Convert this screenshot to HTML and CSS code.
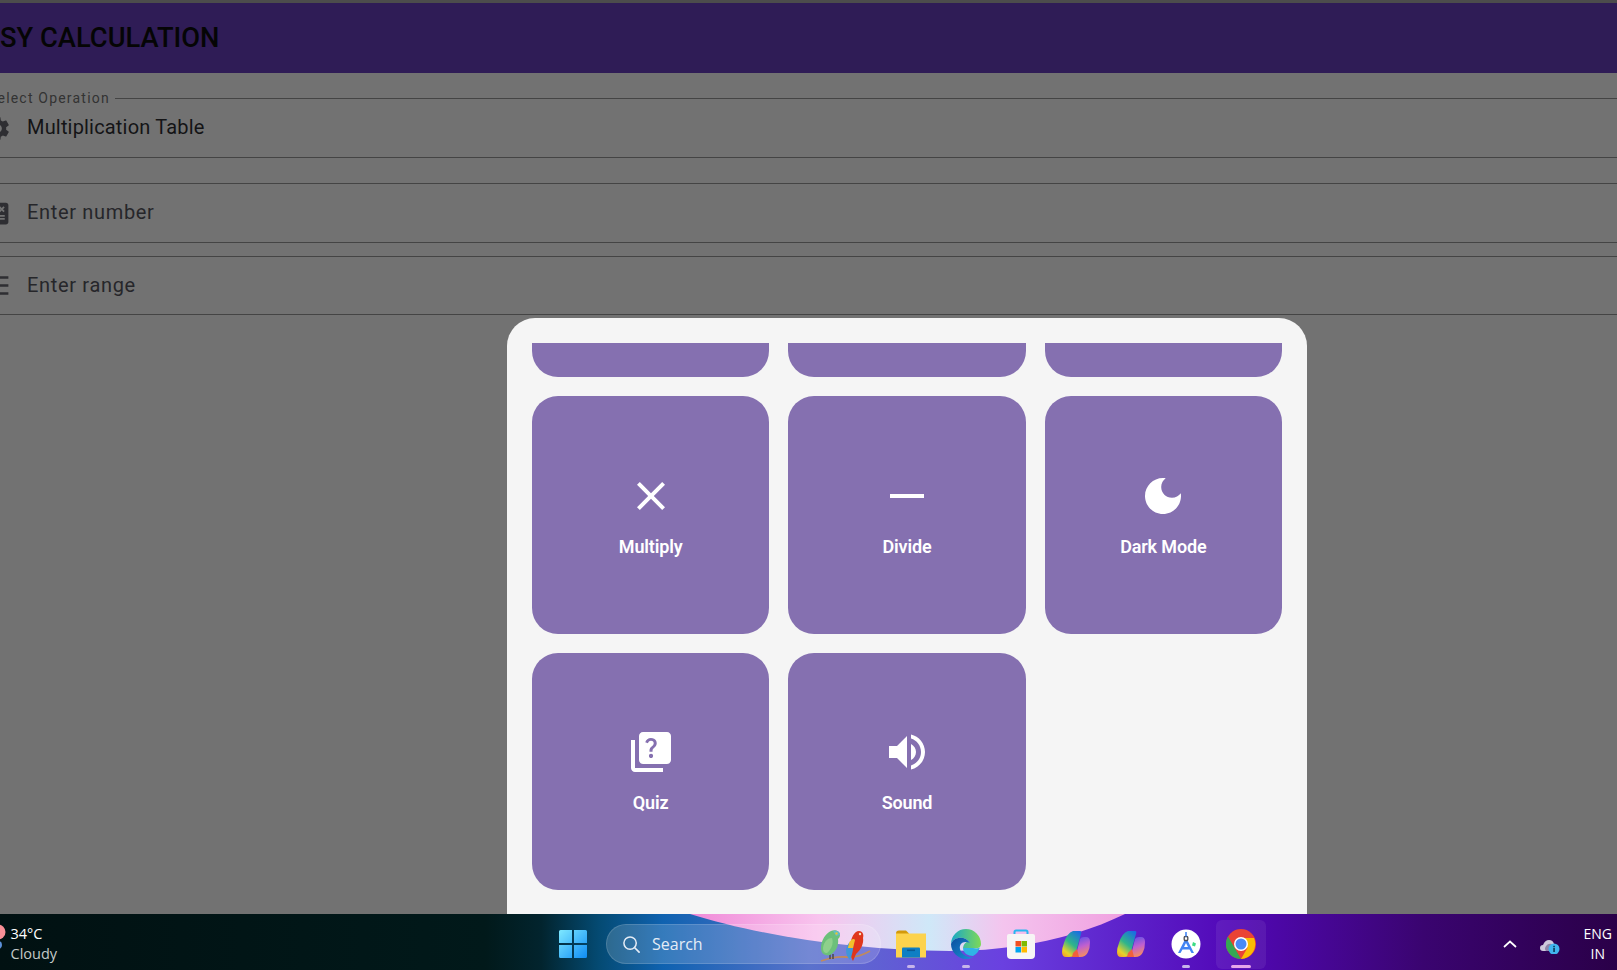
FILE: index.html
```html
<!DOCTYPE html>
<html lang="en">
<head>
<meta charset="utf-8">
<title>Easy Calculation</title>
<link rel="stylesheet" href="styles.css">
</head>
<body>
<div class="top-strip"></div>
<header class="appbar"><h1 class="appbar-title">EASY CALCULATION</h1></header>
<main class="form">
  <div class="field field-select">
    <span class="floating-label">Select Operation</span>
    <svg class="field-icon" viewBox="0 0 24 24"><path d="M19.14 12.94c.04-.3.06-.61.06-.94 0-.32-.02-.64-.07-.94l2.03-1.58c.18-.14.23-.41.12-.61l-1.92-3.32c-.12-.22-.37-.29-.59-.22l-2.39.96c-.5-.38-1.03-.7-1.62-.94l-.36-2.54c-.04-.24-.24-.41-.48-.41h-3.84c-.24 0-.43.17-.47.41l-.36 2.54c-.59.24-1.13.57-1.62.94l-2.39-.96c-.22-.08-.47 0-.59.22L2.74 8.87c-.12.21-.08.47.12.61l2.03 1.58c-.05.3-.09.63-.09.94s.02.64.07.94l-2.03 1.58c-.18.14-.23.41-.12.61l1.92 3.32c.12.22.37.29.59.22l2.39-.96c.5.38 1.03.7 1.62.94l.36 2.54c.05.24.24.41.48.41h3.84c.24 0 .44-.17.47-.41l.36-2.54c.59-.24 1.13-.56 1.62-.94l2.39.96c.22.08.47 0 .59-.22l1.92-3.32c.12-.22.07-.47-.12-.61l-2.01-1.58zM12 15.6c-1.98 0-3.6-1.62-3.6-3.6s1.62-3.6 3.6-3.6 3.6 1.62 3.6 3.6-1.62 3.6-3.6 3.6z"/></svg>
    <span class="field-value">Multiplication Table</span>
  </div>
  <div class="field field-number">
    <svg class="field-icon" viewBox="0 0 24 24"><path d="M19 3H5c-1.1 0-2 .9-2 2v14c0 1.1.9 2 2 2h14c1.1 0 2-.9 2-2V5c0-1.1-.9-2-2-2zm-5.97 4.06L14.09 6l1.41 1.41L16.91 6l1.06 1.06-1.41 1.41 1.41 1.41-1.06 1.06-1.41-1.4-1.41 1.41-1.06-1.06 1.41-1.41-1.41-1.42zm-6.78.66h5v1.5h-5v-1.5zM11.5 16h-2v2H8v-2H6v-1.5h2v-2h1.5v2h2V16zm6.5 1.25h-5v-1.5h5v1.5zm0-2.5h-5v-1.5h5v1.5z"/></svg>
    <span class="field-hint">Enter number</span>
  </div>
  <div class="field field-range">
    <svg class="field-icon" viewBox="0 0 24 24"><path d="M0 4.350h21v2.100H0zM0 10.950h21v2.100H0zM0 17.550h21v2.100H0z"/></svg>
    <span class="field-hint">Enter range</span>
  </div>
</main>

<section class="sheet">
  <div class="sheet-scroll">
    <div class="tile-grid">
      <div class="tile"></div>
      <div class="tile"></div>
      <div class="tile"></div>
      <div class="tile">
        <svg class="tile-icon" viewBox="0 0 24 24"><path d="M19 6.41L17.59 5 12 10.59 6.41 5 5 6.41 10.59 12 5 17.59 6.41 19 12 13.41 17.59 19 19 17.59 13.41 12z"/></svg>
        <span class="tile-label">Multiply</span>
      </div>
      <div class="tile">
        <svg class="tile-icon" viewBox="0 0 24 24"><path d="M3.500 11h17v2h-17z"/></svg>
        <span class="tile-label">Divide</span>
      </div>
      <div class="tile">
        <svg class="tile-icon" viewBox="0 0 24 24"><path d="M12 3c-4.97 0-9 4.03-9 9s4.03 9 9 9 9-4.03 9-9c0-.46-.04-.92-.1-1.36-.98 1.37-2.58 2.26-4.4 2.26-2.98 0-5.4-2.42-5.4-5.4 0-1.81.89-3.42 2.26-4.4-.44-.06-.9-.1-1.36-.1z"/></svg>
        <span class="tile-label">Dark Mode</span>
      </div>
      <div class="tile">
        <svg class="tile-icon" viewBox="0 0 24 24"><path d="M4 6H2v14c0 1.1.9 2 2 2h14v-2H4V6zm16-4H8c-1.1 0-2 .9-2 2v12c0 1.1.9 2 2 2h12c1.1 0 2-.9 2-2V4c0-1.1-.9-2-2-2zm-7.99 13c-.59 0-1.05-.47-1.05-1.05 0-.59.47-1.04 1.05-1.04.59 0 1.04.45 1.04 1.04-.01.58-.45 1.05-1.04 1.05zm2.5-6.17c-.63.93-1.23 1.21-1.56 1.81-.13.24-.18.4-.18 1.18h-1.52c0-.41-.06-1.08.26-1.65.41-.73 1.18-1.16 1.63-1.8.48-.68.21-1.94-1.14-1.94-.88 0-1.32.67-1.5 1.23l-1.37-.57C9.51 5.96 10.52 5 11.99 5c1.23 0 2.08.56 2.51 1.26.37.61.58 1.73.01 2.57z"/></svg>
        <span class="tile-label">Quiz</span>
      </div>
      <div class="tile">
        <svg class="tile-icon" viewBox="0 0 24 24"><path d="M3 9v6h4l5 5V4L7 9H3zm13.500 3c0-1.77-1.02-3.29-2.5-4.03v8.05c1.48-.73 2.5-2.25 2.5-4.02zM14 3.23v2.06c2.89.86 5 3.54 5 6.71s-2.11 5.85-5 6.71v2.06c4.01-.91 7-4.49 7-8.77 0-4.28-2.99-7.86-7-8.77z"/></svg>
        <span class="tile-label">Sound</span>
      </div>
    </div>
  </div>
</section>

<footer class="taskbar">
  <svg class="wallpaper" viewBox="0 0 1617 56" preserveAspectRatio="none">
    <defs>
      <linearGradient id="wp" x1="0" x2="1" y1="0" y2="0">
        <stop offset="0" stop-color="#011112"/>
        <stop offset=".3" stop-color="#01191a"/>
        <stop offset=".335" stop-color="#02242e"/>
        <stop offset=".37" stop-color="#044a72"/>
        <stop offset=".41" stop-color="#0f62b0"/>
        <stop offset=".5" stop-color="#5a72cc"/>
        <stop offset=".62" stop-color="#6a40e0"/>
        <stop offset=".76" stop-color="#5208b8"/>
        <stop offset=".88" stop-color="#3a0470"/>
        <stop offset="1" stop-color="#2a0048"/>
      </linearGradient>
      <linearGradient id="pink" x1="0" x2="1" y1="0" y2="0">
        <stop offset="0" stop-color="#f08ad8"/>
        <stop offset=".3" stop-color="#f8c4ee"/>
        <stop offset=".55" stop-color="#cfe8f8"/>
        <stop offset=".72" stop-color="#f4c4ee"/>
        <stop offset="1" stop-color="#f0a0e0"/>
      </linearGradient>
    </defs>
    <rect width="1617" height="56" fill="url(#wp)"/>
    <path d="M690 0C760 22 860 37 950 37C1020 37 1080 22 1125 0Z" fill="url(#pink)"/>
  </svg>

  <div class="weather">
    <svg class="weather-icon" viewBox="0 0 8 28"><circle cx="-2" cy="8" r="7.500" fill="#f98f96"/><circle cx="-2" cy="21" r="4" fill="#5b8fd8"/></svg>
    <span class="weather-temp">34°C</span>
    <span class="weather-desc">Cloudy</span>
  </div>

  <div class="tb-item">
    <svg class="tb-icon" viewBox="0 0 30 30">
      <defs><linearGradient id="win" x1="0" y1="0" x2="1" y2="1"><stop offset="0" stop-color="#7fe9ff"/><stop offset="1" stop-color="#0f8cf5"/></linearGradient></defs>
      <path fill="url(#win)" d="M1 2.500Q1 1 2.500 1H14V14H1zM16 1H27.500Q29 1 29 2.500V14H16zM1 16H14V29H2.500Q1 29 1 27.500zM16 16H29V27.500Q29 29 27.500 29H16z"/>
    </svg>
  </div>

  <div class="search">
    <svg class="search-icon" viewBox="0 0 20 20"><circle cx="8.500" cy="8.500" r="6.500" fill="none" stroke="#e4ecf6" stroke-width="1.600"/><path d="M13.400 13.400L18 18" stroke="#e4ecf6" stroke-width="1.800" stroke-linecap="round"/></svg>
    <span class="search-text">Search</span>
    <svg class="parrots" viewBox="0 0 52 34">
      <path d="M1 33Q15 28 26 29Q38 30 50 23" stroke="#c08a5c" stroke-width="1.800" fill="none"/>
      <path d="M10 26v5M13 26v5" stroke="#4a4a4a" stroke-width="1.500"/>
      <path d="M1 20C1 12 6 5 11 3C15 1 20 3 20 7C20 9 19 10 18 11C19 17 16 24 10 27C5 28 1 26 1 20Z" fill="#6cc07a"/>
      <path d="M3 20C4 13 8 10 12 10C14 15 11 22 7 25C4 25 3 23 3 20Z" fill="#8ed08c"/>
      <path d="M13 3Q20 2 20 7L16 8Z" fill="#62bcc8"/>
      <circle cx="16.500" cy="5.500" r="1.200" fill="#e8c830"/>
      <path d="M30 18C31 10 34 3 39 3C43 3 44 7 43 10C44 15 41 22 36 26L33 33C31 30 30 24 30 18Z" fill="#e0361c"/>
      <path d="M26 22C27 17 29 13 33 14C34 20 32 27 30 32C28 30 26 27 26 22Z" fill="#3f96d8"/>
      <path d="M29 15C31 11 34 10 35 12L33 20L28 20Z" fill="#f2c22c"/>
      <circle cx="40" cy="6" r="1.200" fill="#f3e2c0"/>
    </svg>
  </div>

  <div class="tb-apps">
    <div class="tb-item has-dot">
      <svg class="tb-icon" viewBox="0 0 30 27">
        <path d="M0 3Q0 0 3 0H10L13 3V10H0Z" fill="#d39a0b"/>
        <path d="M0 3H30V27H0Z" fill="#fcd34d"/>
        <path d="M6 18Q6 17 7 17H23Q24 17 24 18V27H6Z" fill="#0e7fc4"/>
        <rect x="11" y="19" width="8" height="1.600" fill="#0a5a94"/>
      </svg>
    </div>
    <div class="tb-item has-dot">
      <svg class="tb-icon" viewBox="0 0 30 30">
        <defs>
          <linearGradient id="edgeA" x1="0" y1="0" x2="1" y2="0"><stop offset="0" stop-color="#19a7c8"/><stop offset="1" stop-color="#7ed957"/></linearGradient>
          <linearGradient id="edgeB" x1="0" y1="0" x2="1" y2="1"><stop offset="0" stop-color="#0c4f9e"/><stop offset="1" stop-color="#1a90d8"/></linearGradient>
        </defs>
        <path d="M0 15A15 15 0 0 1 30 15C30 19 26 20 22 19L12 19C13 13 17 12 19 14C15 7 3 7 0 15Z" fill="url(#edgeA)"/>
        <path d="M0 15C3 7 15 7 19 14C12 11 8 15 9 20C10 25 16 29 22 28C20 29 18 30 15 30C7 30 0 23 0 15Z" fill="url(#edgeB)"/>
        <path d="M12 19H22C26 20 29 19 29 18C28 22 26 25 22 27C17 27 12 24 12 19Z" fill="#2fb4e6"/>
      </svg>
    </div>
    <div class="tb-item">
      <svg class="tb-icon" viewBox="0 0 30 30">
        <path d="M8.500 7V3Q8.500 1.500 10 1.500H20Q21.500 1.500 21.500 3V7" fill="none" stroke="#29b6f0" stroke-width="2"/>
        <path d="M1 7Q1 5 3 5H27Q29 5 29 7V26Q29 30 25 30H5Q1 30 1 26Z" fill="#f7f5f5"/>
        <rect x="9.500" y="12" width="5.500" height="5.500" fill="#f25022"/>
        <rect x="15.500" y="12" width="5.500" height="5.500" fill="#7fba00"/>
        <rect x="9.500" y="18" width="5.500" height="5.500" fill="#00a4ef"/>
        <rect x="15.500" y="18" width="5.500" height="5.500" fill="#ffb900"/>
      </svg>
    </div>
    <div class="tb-item">
      <svg class="tb-icon copilot" viewBox="0 0 30 28">
        <defs>
          <linearGradient id="copA" x1=".8" y1="0" x2=".2" y2="1"><stop offset="0" stop-color="#1a6fe0"/><stop offset=".5" stop-color="#2fb58a"/><stop offset=".85" stop-color="#e8d22a"/><stop offset="1" stop-color="#f0a82a"/></linearGradient>
          <linearGradient id="copB" x1=".3" y1="0" x2=".6" y2="1"><stop offset="0" stop-color="#5a50e8"/><stop offset=".5" stop-color="#c060d0"/><stop offset="1" stop-color="#f8905a"/></linearGradient>
        </defs>
        <path d="M19 9Q20 7 23 7H25Q29 7 29 12Q29 18 27 22Q25 27 19 27H11Q15 26 16 21Z" fill="url(#copB)"/>
        <path d="M12 1H19Q21 1 20 4L15 22Q13.500 27 8 27H5Q1 27 1 22Q1 18 3 13Q6 3 12 1Z" fill="url(#copA)"/>
        <path d="M12 23L16 19L18 27H11Z" fill="#f0603c"/>
      </svg>
    </div>
    <div class="tb-item">
      <svg class="tb-icon copilot" viewBox="0 0 30 28">
        <path d="M19 9Q20 7 23 7H25Q29 7 29 12Q29 18 27 22Q25 27 19 27H11Q15 26 16 21Z" fill="url(#copB)"/>
        <path d="M12 1H19Q21 1 20 4L15 22Q13.500 27 8 27H5Q1 27 1 22Q1 18 3 13Q6 3 12 1Z" fill="url(#copA)"/>
        <path d="M12 23L16 19L18 27H11Z" fill="#f0603c"/>
      </svg>
    </div>
    <div class="tb-item has-dot">
      <svg class="tb-icon" viewBox="0 0 30 30">
        <circle cx="15" cy="15" r="14.500" fill="#fff"/>
        <path d="M22 13l3 1.500-1 3-3-1z" fill="#3ddc84"/>
        <path d="M13.700 11L7 24h2.500l2-3.500h7l2 3.500H23L16.300 11ZM13 18l2-4 2 4Z" fill="#4285f4"/>
        <rect x="13.200" y="7.500" width="3.600" height="4" rx="1" fill="none" stroke="#4a4a52" stroke-width="1.300"/>
        <path d="M15 3v4.500" stroke="#4285f4" stroke-width="1.600"/>
      </svg>
    </div>
    <div class="tb-item tb-active">
      <svg class="tb-icon" viewBox="0 0 30 30">
        <circle cx="15" cy="15" r="15" fill="#ea4335"/>
        <path d="M15 30A15 15 0 0 1 2 7.500L9 19.500Z" fill="#34a853"/>
        <path d="M15 30L21.500 18.800 15 9H28A15 15 0 0 1 15 30Z" fill="#fbbc04"/>
        <circle cx="15" cy="15" r="7" fill="#fff"/>
        <circle cx="15" cy="15" r="5.500" fill="#4a8af4"/>
      </svg>
    </div>
  </div>

  <div class="tray">
    <svg class="tray-chevron" viewBox="0 0 14 8"><path d="M1 7L7 1.500L13 7" fill="none" stroke="#fff" stroke-width="1.700"/></svg>
    <svg class="tray-cloud" viewBox="0 0 20 16">
      <path d="M3 13Q0 13 0 10Q0 7 3 7Q5 2 9 2Q13 2 14 6Q15 13 12 13Z" fill="#cfc8dc"/>
      <path d="M6 13Q4 11 6 8Q8 5 12 6L10 13Z" fill="#8f84a8"/>
      <circle cx="14" cy="11" r="5.500" fill="#41b4ee"/>
      <rect x="13.300" y="10" width="1.500" height="4" fill="#08304c"/>
      <rect x="13.300" y="7.800" width="1.500" height="1.500" fill="#08304c"/>
    </svg>
    <div class="tray-lang"><span>ENG</span><span>IN</span></div>
  </div>
</footer>
</body>
</html>
```
FILE: styles.css
```css
* { box-sizing: border-box; }
html, body { margin: 0; height: 100%; }
body {
  width: 1617px;
  height: 970px;
  overflow: hidden;
  position: relative;
  display: flex;
  flex-direction: column;
  background: #727272;
  font-family: Roboto, "Liberation Sans", sans-serif;
}
.top-strip { height: 3px; background: #4c4c4c; flex: none; }
.appbar {
  height: 70px;
  flex: none;
  background: #2f1c56;
  display: flex;
  align-items: center;
  overflow: hidden;
}
.appbar-title {
  margin: 0 0 0 -33.500px;
  font-size: 27.300px;
  font-weight: 500;
  color: #050505;
  white-space: nowrap;
}
.form {
  flex: 1;
  min-height: 0;
  padding-top: 25px;
  overflow: hidden;
}
.field {
  position: relative;
  height: 60px;
  display: flex;
  align-items: center;
  gap: 15.500px;
  margin-left: -17.500px;
  border-top: 1.500px solid #444;
  border-bottom: 1.500px solid #444;
  font-size: 20px;
}
.field-number { margin-top: 25px; }
.field-range { margin-top: 13px; height: 59px; }
.field-icon { width: 29px; height: 29px; fill: #2e2e32; flex: none; }
.field-value { color: #141416; letter-spacing: .18px; margin-bottom: 2px; }
.field-hint { color: #26262a; letter-spacing: .67px; margin-bottom: 2px; }
.floating-label {
  position: absolute;
  left: 5.500px;
  top: -9px;
  padding-right: 5px;
  background: #727272;
  font-size: 14px;
  line-height: 16px;
  letter-spacing: 1.200px;
  color: #333;
}
.sheet {
  position: absolute;
  left: 507px;
  top: 318px;
  width: 800px;
  height: 652px;
  padding: 25px 25px 0;
  background: #f5f5f5;
  border-radius: 28px 28px 0 0;
}
.sheet-scroll { height: 100%; overflow: hidden; }
.tile-grid {
  display: grid;
  grid-template-columns: repeat(3, 1fr);
  grid-auto-rows: 237.330px;
  gap: 19px;
  margin-top: -203px;
}
.tile {
  background: #8570b0;
  border-radius: 26px;
  display: flex;
  flex-direction: column;
  align-items: center;
  justify-content: center;
  gap: 16px;
  color: #fff;
}
.tile-icon { width: 48px; height: 48px; fill: #fff; }
.tile-label {
  font-size: 18px;
  line-height: 22px;
  font-weight: 600;
  letter-spacing: -.15px;
}
.taskbar {
  position: relative;
  z-index: 2;
  height: 56px;
  padding-top: 4px;
  flex: none;
  display: flex;
  align-items: center;
  color: #fff;
  font-family: "Open Sans", "Noto Sans", sans-serif;
}
.wallpaper { position: absolute; inset: 0; width: 100%; height: 100%; }
.weather {
  position: relative;
  width: 548px;
  padding-left: 10.500px;
  display: flex;
  flex-direction: column;
  font-size: 14.500px;
  line-height: 20.500px;
}
.weather-icon { position: absolute; left: 0; top: 0; width: 8px; height: 28px; }
.weather-desc { color: #c4cac8; }
.tb-item {
  position: relative;
  width: 50px;
  height: 49px;
  flex: none;
  display: flex;
  align-items: center;
  justify-content: center;
  border-radius: 6px;
}
.tb-icon { width: 30px; height: 30px; }
.tb-icon.copilot { height: 28px; }
.has-dot::after,
.tb-active::after {
  content: "";
  position: absolute;
  bottom: 1px;
  left: 50%;
  width: 8px;
  height: 3px;
  margin-left: -4px;
  border-radius: 2px;
  background: #c6b4ea;
}
.tb-active { background: rgba(255, 255, 255, .07); }
.tb-active::after { width: 20px; margin-left: -10px; background: #e6a6ea; }
.search {
  position: relative;
  width: 275px;
  height: 40px;
  margin-left: 8px;
  padding: 0 10px 0 15px;
  display: flex;
  align-items: center;
  gap: 11px;
  border-radius: 20px;
  background: rgba(255, 255, 255, .16);
  border: 1px solid rgba(255, 255, 255, .14);
}
.search-icon { width: 19px; height: 19px; flex: none; }
.search-text { font-size: 16px; color: #e4ecf6; }
.parrots { width: 52px; height: 34px; flex: none; margin: 2px -2px 0 auto; }
.tb-apps {
  position: relative;
  display: flex;
  gap: 5px;
  margin-left: 5px;
}
.tray {
  position: relative;
  margin-left: auto;
  display: flex;
  align-items: center;
  padding-right: 5px;
}
.tray-chevron { width: 14px; height: 8px; margin-right: 23px; }
.tray-cloud { width: 20px; height: 16px; margin-right: 24px; margin-top: 4px; }
.tray-lang {
  display: flex;
  flex-direction: column;
  align-items: center;
  font-size: 14px;
  line-height: 20px;
}
```
